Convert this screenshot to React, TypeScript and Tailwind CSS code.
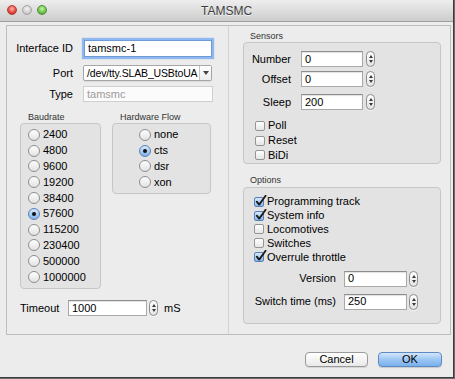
import React from "react";

const Stepper = () => (
  <div className="w-[9px] h-[16px] rounded-full border border-[#8c8c8c] bg-linear-to-b from-white to-[#e4e4e4] flex flex-col items-center justify-between py-[3px] shadow-[0_1px_0_rgba(255,255,255,0.6)]">
    <div className="w-0 h-0 border-l-[2px] border-r-[2px] border-b-[3px] border-l-transparent border-r-transparent border-b-[#3a3a3a]" />
    <div className="w-0 h-0 border-l-[2px] border-r-[2px] border-t-[3px] border-l-transparent border-r-transparent border-t-[#3a3a3a]" />
  </div>
);

const TextField = ({
  value,
  w,
  h = 16,
  focused = false,
  disabled = false,
}: {
  value: string;
  w: string;
  h?: number;
  focused?: boolean;
  disabled?: boolean;
}) => (
  <div
    className={
      "flex items-center pl-[3px] text-[11px] leading-none " +
      w +
      " " +
      (h === 17 ? "h-[17px] " : "h-[16px] ") +
      (focused
        ? "bg-white border border-[#6f9bd6] shadow-[0_0_1px_2px_#8fb8f0] text-black"
        : disabled
        ? "bg-[#fbfbfb] border border-[#cfcfcf] text-[#9a9a9a]"
        : "bg-white border border-[#a9a9a9] border-t-[#8d8d8d] shadow-[inset_0_1px_1px_rgba(0,0,0,0.12)] text-black")
    }
  >
    {value}
  </div>
);

const Radio = ({ label, checked = false }: { label: string; checked?: boolean }) => (
  <div className="flex items-center h-[15.8px]">
    <div
      className={
        "w-[12px] h-[12px] rounded-full flex items-center justify-center " +
        (checked
          ? "border border-[#5a7fb3] bg-linear-to-b from-[#d6e8fb] to-[#7fb2ea]"
          : "border border-[#8e8e8e] bg-linear-to-b from-white to-[#e2e2e2]")
      }
    >
      {checked && <div className="w-[4px] h-[4px] rounded-full bg-[#111]" />}
    </div>
    <span className="ml-[3px] text-[11px] leading-none text-black">{label}</span>
  </div>
);

const Check = ({ label, checked = false, h }: { label: string; checked?: boolean; h: string }) => (
  <div className={"flex items-center " + h}>
    <div
      className={
        "relative w-[10px] h-[10px] rounded-[2px] " +
        (checked
          ? "border border-[#5a7fb3] bg-linear-to-b from-[#d6e8fb] to-[#86b6ec]"
          : "border border-[#959595] bg-linear-to-b from-white to-[#e6e6e6]")
      }
    >
      {checked && (
        <svg
          className="absolute left-[0px] top-[-3px]"
          width="12"
          height="12"
          viewBox="0 0 12 12"
        >
          <path d="M1.8 6.6 L4.2 9.6 L10.6 0.8" fill="none" stroke="#1a1a1a" strokeWidth="1.8" strokeLinecap="round" strokeLinejoin="round" />
        </svg>
      )}
    </div>
    <span className="ml-[3px] text-[11px] leading-none text-black">{label}</span>
  </div>
);

const GroupLabel = ({ children, cls }: { children: React.ReactNode; cls?: string }) => (
  <div className={"text-[9px] leading-[12px] text-[#333] " + (cls ?? "")}>{children}</div>
);

const Label = ({ children, w }: { children: React.ReactNode; w: string }) => (
  <div className={"flex justify-end whitespace-nowrap text-[11px] leading-none text-black " + w}>
    <span>{children}</span>
  </div>
);

export default function App() {
  return (
    <div className="w-[455px] h-[379px] bg-[#6b6b6b] font-['Liberation_Sans',Arial,sans-serif]">
      <div className="w-[454px] h-[378px] bg-[#ececec] border-r border-b border-[#3c3c3c] flex flex-col">
        {/* Title bar */}
        <div className="relative h-[22px] shrink-0 bg-linear-to-b from-[#eeeeee] to-[#cdcdcd] border-b border-[#9f9f9f] flex items-center justify-center">
          <div className="absolute left-[7px] top-[5px] flex gap-[5px]">
            <div className="w-[10px] h-[10px] rounded-full border border-[#b43a33] bg-[radial-gradient(circle_at_50%_35%,#ffb3a8,#e2453a_60%,#b8241a)]" />
            <div className="w-[10px] h-[10px] rounded-full border border-[#a3a3a3] bg-[radial-gradient(circle_at_50%_35%,#f4f4f4,#cfcfcf_60%,#b0b0b0)]" />
            <div className="w-[10px] h-[10px] rounded-full border border-[#4d8e37] bg-[radial-gradient(circle_at_50%_35%,#c6f3a6,#6cc148_60%,#3f8f24)]" />
          </div>
          <span className="text-[12px] text-[#3d3d3d] [text-shadow:0_1px_0_rgba(255,255,255,0.7)]">TAMSMC</span>
        </div>

        {/* Main panel */}
        <div className="ml-[6px] mr-[2px] mt-[3px] h-[310px] border border-[#bdbdbd] bg-[#ececec] flex">
          {/* Left column */}
          <div className="w-[221px] flex flex-col">
            <div className="flex items-center ml-[13px] mt-[14px]">
              <Label w="w-[53px]">Interface ID</Label>
              <div className="ml-[11px]">
                <TextField value="tamsmc-1" w="w-[128px]" h={17} focused />
              </div>
            </div>
            <div className="flex items-center ml-[13px] mt-[8px]">
              <Label w="w-[53px]">Port</Label>
              <div className="ml-[10px] w-[129px] h-[16px] flex bg-white border border-[#a6a6a6] rounded-[2px] shadow-[0_1px_1px_rgba(0,0,0,0.08)]">
                <div className="flex-1 flex items-center pl-[3px] text-[10.5px] tracking-[-0.15px] leading-none text-black overflow-hidden whitespace-nowrap">
                  /dev/tty.SLAB_USBtoUA
                </div>
                <div className="w-[12px] border-l border-[#c4c4c4] flex items-center justify-center bg-linear-to-b from-white to-[#ededed]">
                  <div className="w-0 h-0 border-l-[3px] border-r-[3px] border-t-[4px] border-l-transparent border-r-transparent border-t-[#444]" />
                </div>
              </div>
            </div>
            <div className="flex items-center ml-[13px] mt-[5px]">
              <Label w="w-[53px]">Type</Label>
              <div className="ml-[10px]">
                <TextField value="tamsmc" w="w-[130px]" disabled />
              </div>
            </div>

            <div className="flex ml-[13px] mt-[9px]">
              <div className="flex flex-col">
                <GroupLabel cls="pl-[8px]">Baudrate</GroupLabel>
                <div className="w-[81px] h-[166px] rounded-[4px] border border-[#c6c6c6] bg-[#e3e3e3] pl-[7px] pt-[3px]">
                  <Radio label="2400" />
                  <Radio label="4800" />
                  <Radio label="9600" />
                  <Radio label="19200" />
                  <Radio label="38400" />
                  <Radio label="57600" checked />
                  <Radio label="115200" />
                  <Radio label="230400" />
                  <Radio label="500000" />
                  <Radio label="1000000" />
                </div>
              </div>
              <div className="flex flex-col ml-[11px]">
                <GroupLabel cls="pl-[8px]">Hardware Flow</GroupLabel>
                <div className="w-[99px] h-[71px] rounded-[4px] border border-[#c6c6c6] bg-[#e3e3e3] pl-[26px] pt-[3px]">
                  <Radio label="none" />
                  <Radio label="cts" checked />
                  <Radio label="dsr" />
                  <Radio label="xon" />
                </div>
              </div>
            </div>

            <div className="flex items-center ml-[13px] mt-[11px]">
              <div className="w-[48px] text-[11px] leading-none text-black">Timeout</div>
              <TextField value="1000" w="w-[79px]" />
              <div className="ml-[2px]">
                <Stepper />
              </div>
              <span className="ml-[6px] text-[11px] leading-none text-black">mS</span>
            </div>
          </div>

          {/* Divider */}
          <div className="w-px bg-[#d2d2d2]" />

          {/* Right column */}
          <div className="flex-1 flex flex-col pl-[14px]">
            <GroupLabel cls="pl-[7px] mt-[4px]">Sensors</GroupLabel>
            <div className="w-[198px] h-[122px] rounded-[4px] border border-[#c6c6c6] bg-[#e3e3e3] pl-[10px] pt-[8px]">
              <div className="flex items-center">
                <Label w="w-[37px]">Number</Label>
                <div className="ml-[10px]">
                  <TextField value="0" w="w-[62px]" />
                </div>
                <div className="ml-[3px]">
                  <Stepper />
                </div>
              </div>
              <div className="flex items-center mt-[4px]">
                <Label w="w-[37px]">Offset</Label>
                <div className="ml-[10px]">
                  <TextField value="0" w="w-[62px]" />
                </div>
                <div className="ml-[3px]">
                  <Stepper />
                </div>
              </div>
              <div className="flex items-center mt-[7px]">
                <Label w="w-[37px]">Sleep</Label>
                <div className="ml-[10px]">
                  <TextField value="200" w="w-[62px]" />
                </div>
                <div className="ml-[3px]">
                  <Stepper />
                </div>
              </div>
              <div className="ml-[1px] mt-[8px]">
                <Check label="Poll" h="h-[15px]" />
                <Check label="Reset" h="h-[15px]" />
                <Check label="BiDi" h="h-[14px]" />
              </div>
            </div>

            <GroupLabel cls="pl-[7px] mt-[10px]">Options</GroupLabel>
            <div className="mt-[1px] w-[198px] h-[137px] rounded-[4px] border border-[#c6c6c6] bg-[#e3e3e3] pl-[10px] pt-[7px]">
              <Check label="Programming track" checked h="h-[13.8px]" />
              <Check label="System info" checked h="h-[13.8px]" />
              <Check label="Locomotives" h="h-[13.8px]" />
              <Check label="Switches" h="h-[13.8px]" />
              <Check label="Overrule throttle" checked h="h-[13.8px]" />
              <div className="flex items-center mt-[7px]">
                <Label w="w-[82px]">Version</Label>
                <div className="ml-[8px]">
                  <TextField value="0" w="w-[63px]" />
                </div>
                <div className="ml-[2px]">
                  <Stepper />
                </div>
              </div>
              <div className="flex items-center mt-[7px]">
                <Label w="w-[82px]">Switch time (ms)</Label>
                <div className="ml-[8px]">
                  <TextField value="250" w="w-[63px]" />
                </div>
                <div className="ml-[2px]">
                  <Stepper />
                </div>
              </div>
            </div>
          </div>
        </div>

        {/* Buttons */}
        <div className="flex justify-end gap-[10px] mt-[17px] mr-[11px]">
          <div className="w-[63px] h-[15px] rounded-[4px] border border-[#9a9a9a] bg-linear-to-b from-white to-[#e9e9e9] flex items-center justify-center text-[11px] leading-none text-black shadow-[0_1px_1px_rgba(0,0,0,0.1)]">
            Cancel
          </div>
          <div className="w-[64px] h-[15px] rounded-[4px] border border-[#5e8ac4] bg-linear-to-b from-[#d3e6fb] via-[#9cc6f3] to-[#78b0ec] flex items-center justify-center text-[11px] leading-none text-black shadow-[0_1px_1px_rgba(0,0,0,0.15)]">
            OK
          </div>
        </div>
      </div>
    </div>
  );
}
